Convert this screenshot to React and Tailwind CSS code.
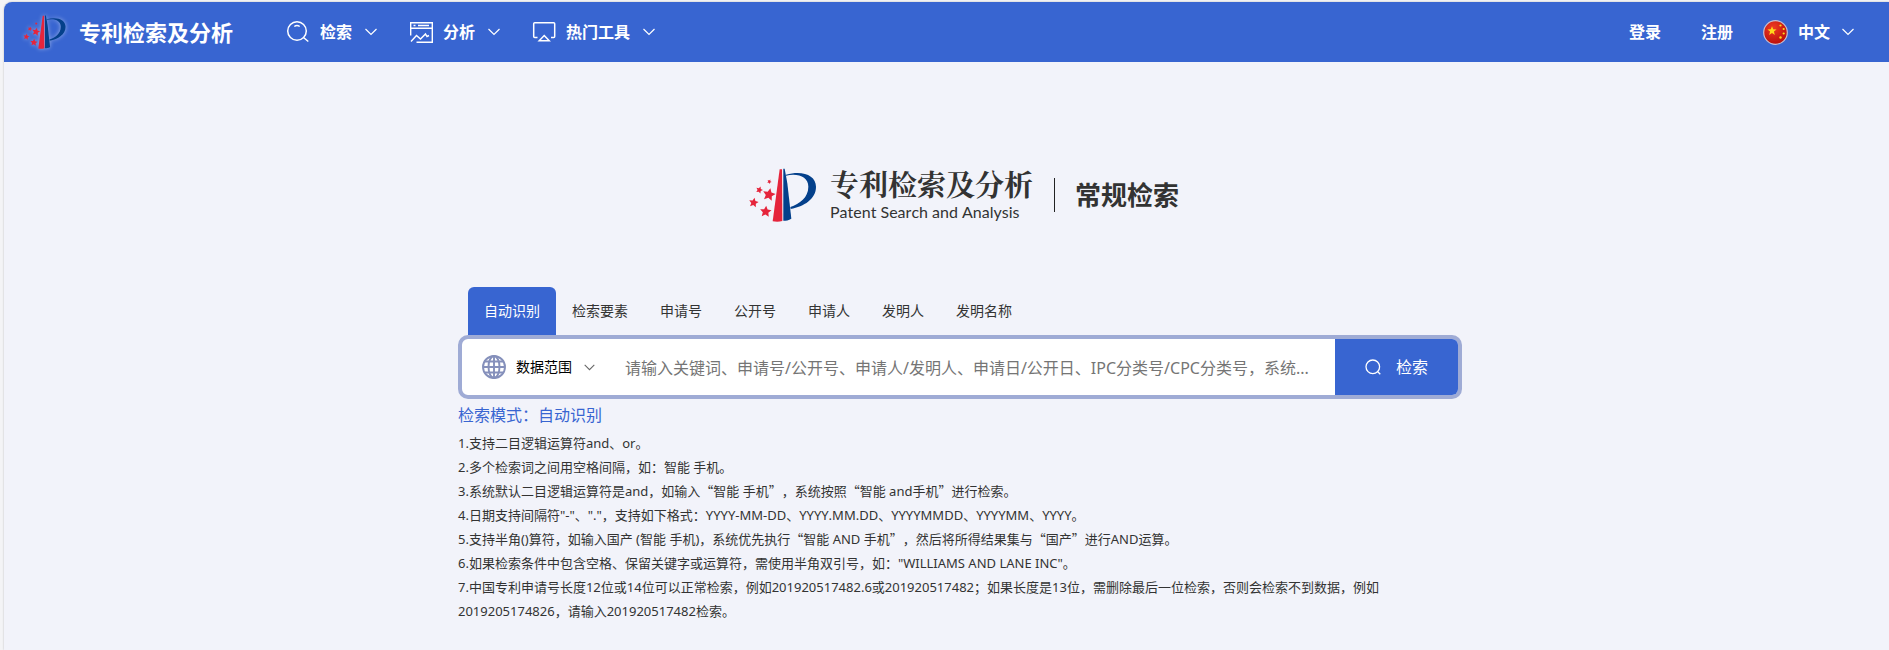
import React, { useState } from 'react';

const navItems = [
  { label: '检索', icon: SearchNavIcon },
  { label: '分析', icon: AnalysisIcon },
  { label: '热门工具', icon: ToolsIcon },
];

const tabs = ['自动识别', '检索要素', '申请号', '公开号', '申请人', '发明人', '发明名称'];

const tips = [
  '1.支持二目逻辑运算符and、or。',
  '2.多个检索词之间用空格间隔，如：智能 手机。',
  '3.系统默认二目逻辑运算符是and，如输入“智能 手机”，系统按照“智能 and手机”进行检索。',
  '4.日期支持间隔符"-"、"."，支持如下格式：YYYY-MM-DD、YYYY.MM.DD、YYYYMMDD、YYYYMM、YYYY。',
  '5.支持半角()算符，如输入国产 (智能 手机)，系统优先执行“智能 AND 手机”，然后将所得结果集与“国产”进行AND运算。',
  '6.如果检索条件中包含空格、保留关键字或运算符，需使用半角双引号，如："WILLIAMS AND LANE INC"。',
  '7.中国专利申请号长度12位或14位可以正常检索，例如201920517482.6或201920517482；如果长度是13位，需删除最后一位检索，否则会检索不到数据，例如2019205174826，请输入201920517482检索。',
];

function Star({ x, y, r, rotate = 0 }) {
  return (
    <path
      fill="#e5243b"
      transform={`translate(${x} ${y}) rotate(${rotate}) scale(${r})`}
      d="M0-1 .29-.38.95-.31.46.15.59.81 0 .48-.59.81-.46.15-.95-.31-.29-.38z"
    />
  );
}

function Logo({ className }) {
  return (
    <svg viewBox="27 22 201 162" className={className} aria-hidden="true">
      <Star x={88} y={63} r={7} rotate={25} />
      <Star x={58} y={88} r={11} rotate={20} />
      <Star x={87} y={102} r={20} rotate={12} />
      <Star x={41} y={126} r={15} rotate={10} />
      <Star x={77} y={153} r={18} rotate={5} />
      <path fill="#e5243b" d="M119 26h7l1 155c-9 3-19 3-29 1z" />
      <path fill="#04408b" d="M130 24h4l8 44 12 106c-8 5-16 6-24 6z" />
      <path
        fill="#04408b"
        d="M138 42c50-14 90 2 90 36 0 37-36 59-76 67l-1-6c28-10 54-28 54-61 0-29-30-41-67-33z"
      />
    </svg>
  );
}

function Chevron({ className }) {
  return (
    <svg viewBox="0 0 12 8" className={className} fill="none" stroke="currentColor" aria-hidden="true">
      <path d="M.5 1 6 6.500 11.500 1" strokeWidth="1.200" />
    </svg>
  );
}

function SearchNavIcon() {
  return (
    <svg viewBox="0 0 24 24" className="size-6" fill="none" stroke="currentColor" strokeWidth="1.500" aria-hidden="true">
      <circle cx="11" cy="11" r="9.300" />
      <path d="M8.300 6.500c1.600-1.200 3.800-1.200 5.400 0M17.500 17.500l4.800 4" />
    </svg>
  );
}

function AnalysisIcon() {
  return (
    <svg viewBox="0 0 24 24" className="size-6" fill="none" stroke="currentColor" strokeWidth="1.400" aria-hidden="true">
      <path d="M1.700 15.500V2.700h21.600v19.600H7.500M1.700 8.200h21.600M4.500 5.500h2M9 5.500h11" />
      <path d="M2 21.500l5.500-6 4 3.500 5-5 1.500 2.500 2-1" />
    </svg>
  );
}

function ToolsIcon() {
  return (
    <svg viewBox="0 0 24 24" className="size-6" fill="none" stroke="currentColor" strokeWidth="1.500" aria-hidden="true">
      <path d="M5.500 17.500H2.700q-1 0-1-1V3.700q0-1 1-1h19q1 0 1 1v12.800q0 1-1 1H19" />
      <path d="M12.200 15.500l5 5.200h-10z" />
    </svg>
  );
}

function GlobeIcon() {
  return (
    <svg viewBox="0 0 24 24" className="size-6 text-[#8590bb]" fill="none" stroke="currentColor" strokeWidth="1.900" aria-hidden="true">
      <circle cx="12" cy="12" r="11" />
      <ellipse cx="12" cy="12" rx="5.500" ry="11" />
      <path d="M12 1v22M1 12h22M3 6.500h18M3 17.500h18" />
    </svg>
  );
}

function FlagIcon() {
  return (
    <svg viewBox="0 0 25 25" className="size-[25px]" aria-hidden="true">
      <defs>
        <radialGradient id="flag" cx=".4" cy=".3" r=".8">
          <stop offset="0" stopColor="#ee3a24" />
          <stop offset="1" stopColor="#b30a05" />
        </radialGradient>
      </defs>
      <circle cx="12.500" cy="12.500" r="11.800" fill="url(#flag)" stroke="#c9bfd0" strokeWidth="1.200" />
      <g fill="#ffd91c">
        <path transform="translate(9 11) scale(4.800)" d="M0-1 .25-.34.95-.31.4.13.59.81 0 .42-.59.81-.4.13-.95-.31-.25-.34z" />
        <circle cx="17.500" cy="5.500" r="1.100" />
        <circle cx="20.700" cy="9" r="1.100" />
        <circle cx="20.700" cy="13.500" r="1.100" />
        <circle cx="17.500" cy="17.500" r="1.200" />
      </g>
    </svg>
  );
}

// Curly quotes take the full-width glyphs of the Chinese font
function Tip({ text }) {
  return (
    <li>
      {text.split(/([“”])/).map((part, i) =>
        part === '“' || part === '”' ? (
          <span key={i} className="font-['Noto_Sans_CJK_SC',sans-serif]">{part}</span>
        ) : (
          part
        )
      )}
    </li>
  );
}

function Header() {
  return (
    <header className="flex h-[60px] items-center rounded-tl-lg bg-[#3865d1] pr-[35px] pl-[19px] text-base font-bold text-white">
      <a href="#" className="flex items-center gap-[13px]">
        <Logo className="h-[34px] w-[43px] drop-shadow-[0_0_2px_rgba(255,255,255,0.5)]" />
        <span className="text-[22px] leading-8">专利检索及分析</span>
      </a>

      <nav className="ml-[53px] flex items-center gap-8">
        {navItems.map(({ label, icon: Icon }) => (
          <button key={label} type="button" className="flex items-center">
            <Icon />
            <span className="ml-[10px]">{label}</span>
            <Chevron className="ml-[13px] h-2 w-3" />
          </button>
        ))}
      </nav>

      <div className="ml-auto flex items-center">
        <a href="#">登录</a>
        <a href="#" className="ml-10">注册</a>
        <button type="button" className="ml-[30px] flex items-center">
          <FlagIcon />
          <span className="ml-[10px]">中文</span>
          <Chevron className="ml-3 h-2 w-3" />
        </button>
      </div>
    </header>
  );
}

function App() {
  const [activeTab, setActiveTab] = useState(tabs[0]);
  const [query, setQuery] = useState('');

  return (
    <div className="min-h-screen bg-[#f4f4f6] pt-[2px] pl-1 font-['Noto_Sans','Noto_Sans_CJK_SC',sans-serif] text-[#333] [font-kerning:none] [text-spacing-trim:space-all]">
      <div className="min-h-[calc(100vh-2px)] rounded-tl-lg bg-[#f2f3fa] shadow-[0_0_2px_rgba(0,0,0,0.25)]">
        <Header />

        <main className="pt-[106px] pl-[27px]">
          <div className="flex items-center justify-center pl-2">
            <Logo className="h-[54px] w-[67px]" />
            <div className="ml-[14px] flex w-[201px] flex-col pt-[2px]">
              <span className="font-['Liberation_Serif','Noto_Serif_CJK_SC','Noto_Sans_CJK_SC',serif] text-[29px] leading-8 font-bold whitespace-nowrap">
                专利检索及分析
              </span>
              <span className="font-['Lato',sans-serif] text-base leading-5 whitespace-nowrap">
                Patent Search and Analysis
              </span>
            </div>
            <div className="ml-[23px] h-[34px] w-px bg-[#222]"></div>
            <h1 className="ml-5 text-[26px] leading-9 font-bold">常规检索</h1>
          </div>

          <section className="mx-auto mt-[65px] max-w-[1004px]">
            <div role="tablist" className="flex pl-[10px] text-sm">
              {tabs.map((tab) => (
                <button
                  key={tab}
                  type="button"
                  role="tab"
                  aria-selected={tab === activeTab}
                  onClick={() => setActiveTab(tab)}
                  className={`h-12 rounded-t-md px-4 ${tab === activeTab ? 'bg-[#3865d1] text-white' : ''}`}
                >
                  {tab}
                </button>
              ))}
            </div>

            <form
              onSubmit={(e) => e.preventDefault()}
              className="flex h-16 overflow-hidden rounded-[10px] border-4 border-[#9fabd5] bg-white"
            >
              <button type="button" className="flex shrink-0 items-center pl-5 text-sm text-black">
                <GlobeIcon />
                <span className="ml-[10px]">数据范围</span>
                <Chevron className="ml-3 h-[7px] w-[11px] text-[#666]" />
              </button>
              <input
                type="text"
                aria-label="检索内容"
                value={query}
                onChange={(e) => setQuery(e.target.value)}
                placeholder="请输入关键词、申请号/公开号、申请人/发明人、申请日/公开日、IPC分类号/CPC分类号，系统..."
                className="ml-[30px] min-w-0 flex-1 pt-[2px] text-base outline-none placeholder:text-[#757575]"
              />
              <button
                type="submit"
                className="flex w-[123px] shrink-0 items-center justify-center gap-[15px] bg-[#3865d1] text-base text-white"
              >
                <svg viewBox="0 0 16 16" className="size-4" fill="none" stroke="currentColor" strokeWidth="1.300" aria-hidden="true">
                  <circle cx="7.800" cy="7.800" r="6.800" />
                  <path d="M12.300 12.300l3 3" />
                </svg>
                检索
              </button>
            </form>

            <p className="mt-1 text-base leading-6 text-[#3865d1]">检索模式：{activeTab}</p>
            <ul className="mt-1 text-[13px] leading-6">
              {tips.map((tip) => (
                <Tip key={tip} text={tip} />
              ))}
            </ul>
          </section>
        </main>
      </div>
    </div>
  );
}

export default App;
